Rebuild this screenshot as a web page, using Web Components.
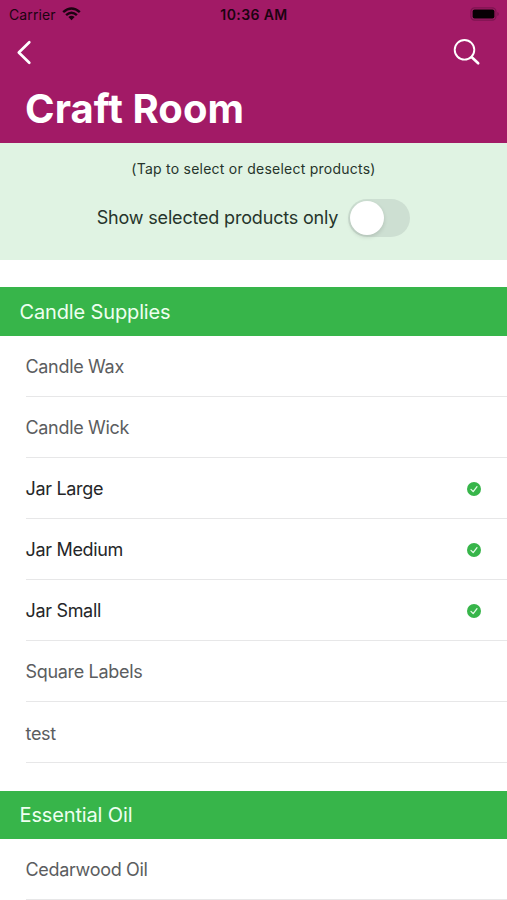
<!DOCTYPE html>
<html lang="en">
<head>
<meta charset="utf-8">
<title>Craft Room</title>
<style>
html,body{margin:0;background:#fff;height:900px;overflow:hidden}
body{font-family:Inter,"Liberation Sans",sans-serif}
</style>
</head>
<body>
<craft-app></craft-app>
<script>
const define = (name, html, setup) => customElements.define(name, class extends HTMLElement {
  constructor() {
    super();
    this.attachShadow({mode: 'open'}).innerHTML = html;
  }
  connectedCallback() { if (setup) setup(this, this.shadowRoot); }
});

define('status-bar', `
<style>
:host{display:grid;grid-template-columns:1fr auto 1fr;align-items:center;height:28px;padding:0 8px 0 9px;color:#1c0311;font-size:14px;box-sizing:border-box}
.left{display:flex;align-items:center;gap:6px}
.carrier{letter-spacing:.12px}
.time{font-weight:600;letter-spacing:.4px}
.battery{justify-self:end}
svg{display:block}
</style>
<div class="left"><span class="carrier">Carrier</span>
<svg width="19" height="14" viewBox="0 0 19 14" fill="none" stroke="#1c0311" stroke-width="2.5"><path d="M1.2 5.1Q9.5-2.1 17.8 5.1M4.1 8.1Q9.5 3.3 14.9 8.1"/><path d="M9.5 13.2 6.4 10.1Q9.5 7.6 12.6 10.1Z" fill="#1c0311" stroke="none"/></svg></div>
<span class="time">10:36 AM</span>
<svg class="battery" width="29" height="14" viewBox="0 0 29 14"><rect x=".9" y=".9" width="25" height="12.2" rx="3.6" fill="none" stroke="#7d1450" stroke-width="1.2"/><rect x="2.6" y="2.5" width="21.8" height="9" rx="2" fill="#080004"/><path d="M27.3 5v4q1.5-.7 1.5-2t-1.5-2" fill="#7d1450"/></svg>
`);

define('nav-header', `
<style>
:host{display:block;height:142.6px;background:#a21a66;color:#fff;box-sizing:border-box}
.bar{display:flex;justify-content:space-between;align-items:center;height:48px;padding:0 26px 0 16px}
svg{display:block}
h1{margin:8px 0 0 25px;font-size:40px;line-height:50px;font-weight:700;letter-spacing:.08px;white-space:nowrap}
</style>
<status-bar></status-bar>
<div class="bar">
<svg width="16" height="25" viewBox="0 0 16 25" fill="none" stroke="#fff" stroke-width="2.7" stroke-linecap="round" stroke-linejoin="round"><path d="M13.3 2.2 2.8 12.5 13.3 22.7"/></svg>
<svg width="28" height="28" viewBox="0 0 28 28" fill="none" stroke="#fff" stroke-linecap="round"><circle cx="11.5" cy="11.8" r="9.8" stroke-width="1.9"/><path d="M18.8 19.2 25.2 25.3" stroke-width="2.6"/></svg>
</div>
<h1><slot></slot></h1>
`);

define('toggle-switch', `
<style>
:host{display:block;width:62px;height:38px;border-radius:19px;background:#cddfd2;padding:2px 1.5px;box-sizing:border-box}
.knob{width:34px;height:34px;border-radius:50%;background:#fff;box-shadow:0 2px 4px #0002}
</style><div class="knob"></div>`);

define('filter-panel', `
<style>
:host{display:flex;flex-direction:column;align-items:center;height:117.4px;background:#e0f3e3;color:#26352b;box-sizing:border-box;padding-top:16px}
.hint{font-size:14px;line-height:20px;letter-spacing:.24px}
.row{display:flex;align-items:center;gap:10px;margin-top:20px;font-size:18px;line-height:24px}
.label{letter-spacing:-.18px}
</style>
<span class="hint">(Tap to select or deselect products)</span>
<div class="row"><span class="label">Show selected products only</span><toggle-switch></toggle-switch></div>
`);

define('product-section', `
<style>
:host{display:block;padding-top:27.1px}
h2{display:flex;align-items:center;height:48.7px;margin:0;padding:1px 0 0 19.5px;box-sizing:border-box;background:#37b54a;color:#eefff0;font-size:20px;font-weight:400;letter-spacing:-.14px}
</style><h2></h2><slot></slot>`, (el, root) => {
  root.querySelector('h2').textContent = el.getAttribute('heading');
});

define('product-row', `
<style>
:host{display:flex;align-items:center;justify-content:space-between;height:61.1px;margin-left:25.5px;padding:1.4px 26px 0 0;border-bottom:1px solid #e7e7e8;box-sizing:border-box;color:#5b5d60;font-size:18px;letter-spacing:-.32px}
:host([selected]){color:#252628}
svg{display:none}
:host([selected]) svg{display:block}
</style>
<span><slot></slot></span>
<svg width="14" height="14" viewBox="0 0 14 14"><circle cx="7" cy="7" r="7" fill="#37b54a"/><path d="M4 7.4 6.2 9.6 10 4.7" fill="none" stroke="#e5fbe8" stroke-width="1.3" stroke-linecap="round" stroke-linejoin="round"/></svg>
`);

define('craft-app', `
<style>:host{display:block;width:507px;height:900px;overflow:hidden;background:#fff}</style>
<nav-header>Craft Room</nav-header>
<filter-panel></filter-panel>
<product-section heading="Candle Supplies">
<product-row>Candle Wax</product-row>
<product-row>Candle Wick</product-row>
<product-row selected>Jar Large</product-row>
<product-row selected>Jar Medium</product-row>
<product-row selected>Jar Small</product-row>
<product-row>Square Labels</product-row>
<product-row>test</product-row>
</product-section>
<product-section heading="Essential Oil">
<product-row>Cedarwood Oil</product-row>
</product-section>
`);
</script>
</body>
</html>
